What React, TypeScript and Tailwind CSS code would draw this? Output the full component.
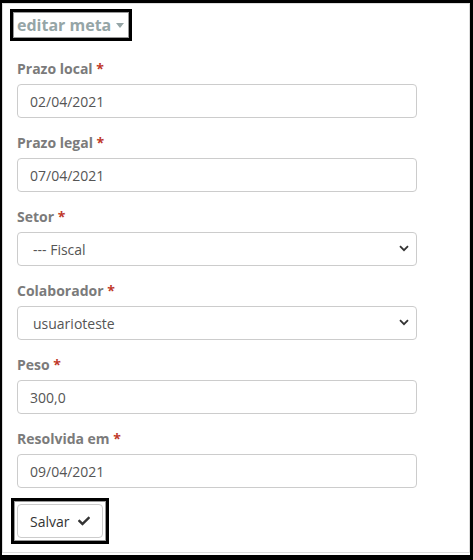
import {FunctionComponent} from 'react'
import {FaCheck} from 'react-icons/fa'

const font = {fontFamily: '"Open Sans", "Liberation Sans", sans-serif'}

type Field = {label: string; value: string; kind: 'input' | 'select'}

const fields: Field[] = [
  {label: 'Prazo local', value: '02/04/2021', kind: 'input'},
  {label: 'Prazo legal', value: '07/04/2021', kind: 'input'},
  {label: 'Setor', value: '--- Fiscal', kind: 'select'},
  {label: 'Colaborador', value: 'usuarioteste', kind: 'select'},
  {label: 'Peso', value: '300,0', kind: 'input'},
  {label: 'Resolvida em', value: '09/04/2021', kind: 'input'},
]

const Chevron = () => (
  <svg
    className="absolute right-[8px] top-[13px] w-[10px] h-[7px] pointer-events-none"
    viewBox="0 0 10 7"
    fill="none"
  >
    <path d="M1 1.2 L5 5.2 L9 1.2" stroke="#333" strokeWidth="1.8" />
  </svg>
)

const FormGroup: FunctionComponent<{field: Field}> = ({field}) => {
  return (
    <div className="mb-[15px]">
      <label className="block mb-[5px] text-[14px] leading-[20px] font-bold text-[#7b7b7b]">
        {field.label} <span className="text-[#c0392b]">*</span>
      </label>
      {field.kind === 'input' ? (
        <input
          readOnly
          value={field.value}
          className="block w-[400px] h-[34px] px-[12px] text-[14px] text-[#555] border border-[#ccc] rounded-[4px] bg-white outline-none"
          style={font}
        />
      ) : (
        <div className="relative w-[400px]">
          <select
            value={field.value}
            onChange={() => {}}
            className="block w-full h-[34px] pl-[15px] pr-[24px] text-[14px] text-[#555] border border-[#ccc] rounded-[4px] bg-white appearance-none outline-none"
            style={font}
          >
            <option>{field.value}</option>
          </select>
          <Chevron />
        </div>
      )}
    </div>
  )
}

const App: FunctionComponent = () => {
  return (
    <div
      className="w-[473px] h-[560px] flex flex-col bg-white border-black border-t-[3px] border-l-[2px] border-r-[3px] border-b-[5px]"
      style={font}
    >
      <div className="flex-1 mb-[2px] border border-[#ddd] flex flex-col items-start">
        <div className="ml-[7px] mt-[5px] border-[3px] border-black">
          <div className="border border-[#999] pl-[3px] pr-[4px] h-[26px] flex items-center gap-[5px]">
            <span className="text-[16px] font-bold text-[#95a5a6] leading-none">editar meta</span>
            <svg className="w-[8px] h-[5px]" viewBox="0 0 8 5">
              <path d="M0 0 L8 0 L4 5 Z" fill="#95a5a6" />
            </svg>
          </div>
        </div>
        <form className="ml-[14px] mt-[18px]">
          {fields.map(f => (
            <FormGroup key={f.label} field={f} />
          ))}
        </form>
        <div className="ml-[8px] -mt-[5px] border-[3px] border-black">
          <div className="border border-[#999] p-[2px]">
            <button
              type="button"
              className="h-[34px] px-[12px] flex items-center gap-[9px] text-[14px] text-[#333] border border-[#ccc] rounded-[4px] bg-white"
              style={font}
            >
              Salvar
              <FaCheck className="w-[12px] h-[12px] text-[#333]" />
            </button>
          </div>
        </div>
      </div>
    </div>
  )
}

export default App
